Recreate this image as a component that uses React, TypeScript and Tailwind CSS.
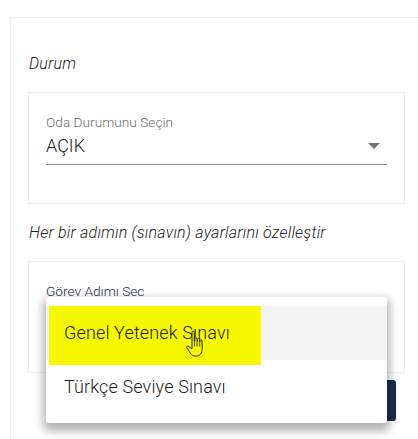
// Pointer drawn over the highlighted option
function HandCursor() {
  return (
    <svg width="19" height="28" viewBox="0 0 19 28" className="block">
      <path
        d="M6 2.300c0-1.600 2.300-1.600 2.300 0v9l.5-.2V8.800c0-1.400 2.200-1.400 2.200 0v2.600l.5.100V9.600c0-1.300 2.100-1.300 2.100 0v2.200l.5.100v-1.300c0-1.200 2-1.200 2 0v8.200c0 4.400-2.600 7.400-6.200 7.400-2.800 0-4.300-1.100-5.600-3.100L.9 17.800c-.8-1.300.9-2.600 2-1.500L5.500 19 6 18.800V2.300z"
        fill="#f6f800"
        stroke="#26260a"
        strokeWidth="1"
        strokeLinejoin="round"
      />
      <path d="M8.500 11.500v5M11.100 11.500v5M13.700 11.800v4.700" stroke="#26260a" strokeWidth="0.8" fill="none" />
    </svg>
  );
}

export default function App() {
  return (
    <div className="h-[439px] w-[418px] overflow-hidden bg-white font-['Roboto',sans-serif]">
      <div className="pt-[17px] pl-[10px]">
        <div className="h-[500px] w-[440px] border border-[#efefef] pt-[36px] pl-[17px]">
          <p className="pl-[1px] text-[16px] leading-[19px] font-light tracking-[0.2px] text-[#222222] italic">Durum</p>

          <div className="mt-[19px] h-[112px] w-[377px] border border-[#efefef] px-[17px] pt-[21px]">
            <div className="text-[13.7px] leading-[16px] font-light text-[#6f6f6f]">Oda Durumunu Seçin</div>
            <div className="flex h-[35px] w-[341px] items-center justify-between border-b border-[#8c8c8c] pr-[6px] pb-[2px]">
              <span className="text-[18px] leading-[22px] font-light text-[#222222]">AÇIK</span>
              <span className="mr-[1px] h-0 w-0 border-x-[6px] border-t-[6px] border-x-transparent border-t-[#757575]" />
            </div>
          </div>

          <p className="mt-[19px] pl-[1px] text-[16px] leading-[19px] font-light tracking-[0.22px] text-[#222222] italic">
            Her bir adımın (sınavın) ayarlarını özelleştir
          </p>

          <div className="relative mt-[19px] h-[112px] w-[377px] border border-[#efefef] px-[17px] pt-[21px]">
            <div className="text-[13.7px] leading-[16px] font-light text-[#1c2c54]">Görev Adımı Sec</div>

            <div className="absolute top-[35px] left-[17px] z-10 h-[126px] w-[341px] rounded-[3px] bg-white py-[9px] shadow-[0_5px_10px_3px_rgba(0,0,0,0.3)]">
              <div className="relative flex h-[54px] items-center bg-[#f3f3f3] pl-[18px]">
                <div className="absolute top-0 left-[3px] h-[59px] w-[212px] bg-[#f6f800]" />
                <span className="relative text-[18px] leading-[22px] font-light tracking-[0.14px] text-[#1a1a00]">Genel Yetenek Sınavı</span>
                <div className="absolute top-[24px] left-[140px] z-20">
                  <HandCursor />
                </div>
              </div>
              <div className="flex h-[54px] items-center pl-[18px]">
                <span className="text-[18px] leading-[22px] font-light tracking-[0.14px] text-[#222222]">Türkçe Seviye Sınavı</span>
              </div>
            </div>
          </div>

          <div className="mt-[7px] flex w-[368px] justify-end">
            <div className="h-[41px] w-[90px] rounded-[3px] bg-[#1c2c54]" />
          </div>
        </div>
      </div>
    </div>
  );
}
